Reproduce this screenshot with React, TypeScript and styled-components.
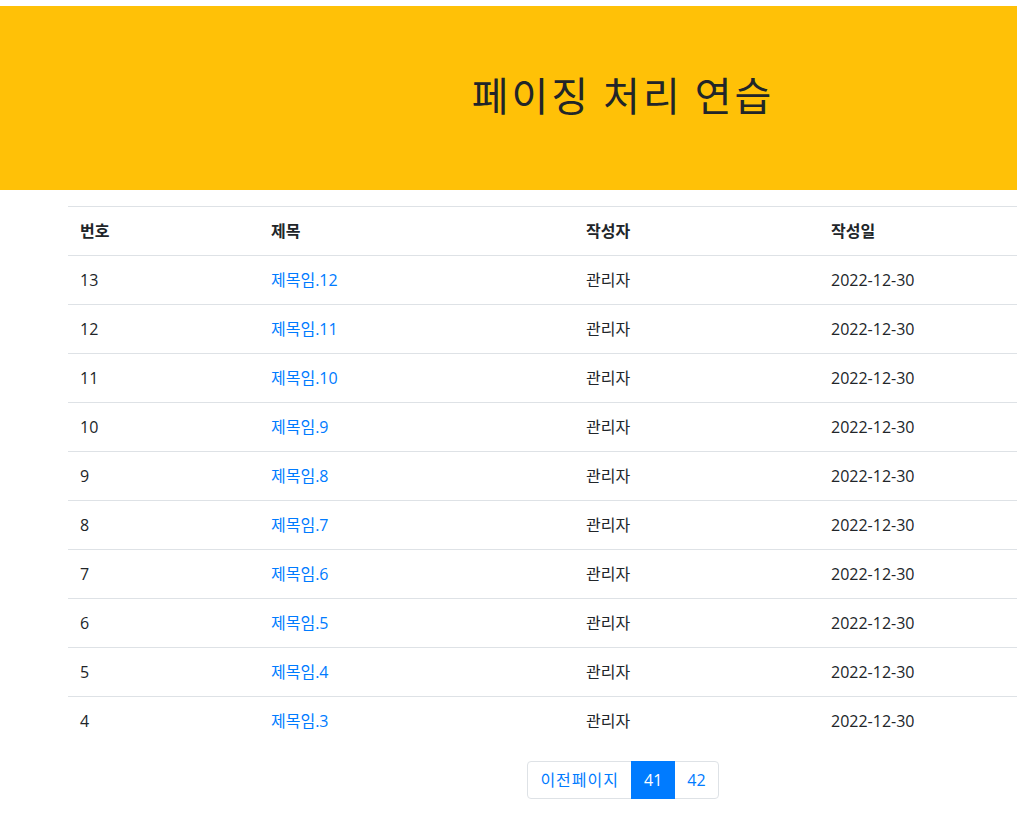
import React from "react";
import styled, { createGlobalStyle } from "styled-components";

const GlobalStyle = createGlobalStyle`
  html, body {
    margin: 0;
    padding: 0;
    overflow-x: hidden;
    background: #fff;
  }
  body {
    font-family: "Open Sans", "Noto Sans CJK KR", sans-serif;
    font-size: 16px;
    line-height: 1.5;
    color: #212529;
  }
  * { box-sizing: border-box; }
`;

const Page = styled.div`
  width: 1246px;
  padding-top: 6px;
`;

const Jumbotron = styled.header`
  background: #ffc107;
  padding: 64px 32px;
  margin-bottom: 16px;
  text-align: center;
`;

const Title = styled.h1`
  margin: 0 0 8px;
  font-family: "Noto Sans CJK KR", sans-serif;
  font-size: 40px;
  font-weight: 400;
  line-height: 1.2;
  letter-spacing: 3px;
  color: #212529;
`;

const Container = styled.main`
  width: 1140px;
  margin: 0 auto;
  padding: 0 15px;
`;

const Table = styled.table`
  width: 100%;
  border-collapse: collapse;
  margin-bottom: 16px;
  table-layout: fixed;
`;

const Th = styled.th<{ $w: number }>`
  width: ${(p) => p.$w}px;
  text-align: left;
  padding: 12px;
  font-weight: 700;
  border-top: 1px solid #dee2e6;
  border-bottom: 1px solid #dee2e6;
  vertical-align: bottom;
`;

const Td = styled.td`
  padding: 12px;
  border-top: 1px solid #dee2e6;
  vertical-align: top;
`;

const Row = styled.tr`
  &:first-child td { border-top: none; }
`;

const TitleLink = styled.a`
  color: #007bff;
  text-decoration: none;
`;

const Pagination = styled.nav`
  display: flex;
  justify-content: center;
`;

const PageItem = styled.a<{ $active?: boolean; $first?: boolean; $last?: boolean }>`
  display: block;
  padding: 8px 12px;
  line-height: 20px;
  font-size: 16px;
  letter-spacing: ${(p) => (p.$first ? "1px" : "0")};
  margin-left: ${(p) => (p.$first ? "0" : "-1px")};
  border: 1px solid ${(p) => (p.$active ? "#007bff" : "#dee2e6")};
  background: ${(p) => (p.$active ? "#007bff" : "#fff")};
  color: ${(p) => (p.$active ? "#fff" : "#007bff")};
  text-decoration: none;
  border-radius: ${(p) => (p.$first ? "4px 0 0 4px" : p.$last ? "0 4px 4px 0" : "0")};
  position: relative;
  z-index: ${(p) => (p.$active ? 1 : 0)};
`;

const rows = Array.from({ length: 10 }, (_, i) => ({
  no: 13 - i,
  title: `제목임.${12 - i}`,
  writer: "관리자",
  date: "2022-12-30",
}));

export default function App() {
  return (
    <>
      <GlobalStyle />
      <Page>
        <Jumbotron>
          <Title>페이징 처리 연습</Title>
        </Jumbotron>
        <Container>
          <Table>
            <thead>
              <tr>
                <Th $w={191}>번호</Th>
                <Th $w={315}>제목</Th>
                <Th $w={245}>작성자</Th>
                <Th $w={359}>작성일</Th>
              </tr>
            </thead>
            <tbody>
              {rows.map((r) => (
                <Row key={r.no}>
                  <Td>{r.no}</Td>
                  <Td>
                    <TitleLink href="#">{r.title}</TitleLink>
                  </Td>
                  <Td>{r.writer}</Td>
                  <Td>{r.date}</Td>
                </Row>
              ))}
            </tbody>
          </Table>
          <Pagination>
            <PageItem href="#" $first>
              이전페이지
            </PageItem>
            <PageItem href="#" $active>
              41
            </PageItem>
            <PageItem href="#" $last>
              42
            </PageItem>
          </Pagination>
        </Container>
      </Page>
    </>
  );
}
